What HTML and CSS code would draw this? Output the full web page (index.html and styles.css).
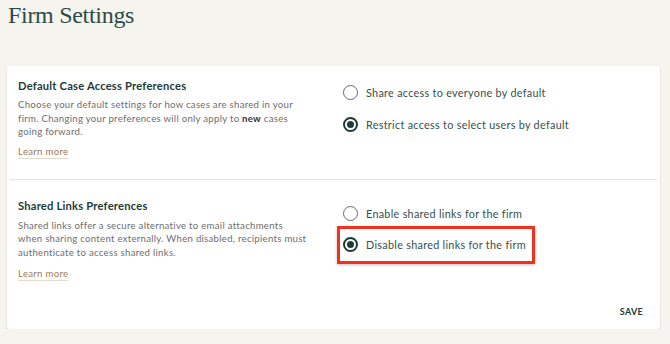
FILE: index.html
```html
<!DOCTYPE html>
<html lang="en">
  <head>
    <meta charset="UTF-8" />
    <title>Firm Settings</title>
    <link rel="stylesheet" href="styles.css">
  </head>
  <body>
    <h1 class="page-title">Firm Settings</h1>

    <div class="settings-card">
      <!-- Default case access -->
      <div class="pref-section first">
        <div class="pref-info">
          <h2>Default Case Access Preferences</h2>
          <p>Choose your default settings for how cases are shared in your firm. Changing your preferences will only apply to <strong>new</strong> cases going forward.</p>
          <a href="#" class="learn-more">Learn more</a>
        </div>
        <div class="pref-options">
          <label class="radio-row">
            <span class="radio"></span>
            Share access to everyone by default
          </label>
          <label class="radio-row">
            <span class="radio checked"></span>
            Restrict access to select users by default
          </label>
        </div>
      </div>

      <!-- Shared links -->
      <div class="pref-section second">
        <div class="pref-info">
          <h2>Shared Links Preferences</h2>
          <p>Shared links offer a secure alternative to email attachments when sharing content externally. When disabled, recipients must authenticate to access shared links.</p>
          <a href="#" class="learn-more">Learn more</a>
        </div>
        <div class="pref-options">
          <label class="radio-row">
            <span class="radio"></span>
            Enable shared links for the firm
          </label>
          <label class="radio-row highlight">
            <span class="radio checked"></span>
            Disable shared links for the firm
          </label>
        </div>
      </div>

      <div class="card-footer">
        <button class="save-btn">SAVE</button>
      </div>
    </div>
  </body>
</html>
```

FILE: styles.css
```css
* {
  margin: 0;
  padding: 0;
  box-sizing: border-box;
}

body {
  font-family: Lato, "Noto Sans", sans-serif;
  background-color: #f6f4ef;
  padding: 0 10px 0 7px;
  color: #1f3d3a;
}

/* --- Title --- */
.page-title {
  font-family: "Liberation Serif", serif;
  font-weight: normal;
  font-size: 24px;
  line-height: 30px;
  color: #2e4b47;
  padding-left: 1px;
  letter-spacing: -0.3px;
}

/* --- Card --- */
.settings-card {
  margin-top: 36px;
  background-color: #fff;
  border-radius: 3px;
  box-shadow: 0 1px 2px rgba(0, 0, 0, 0.18);
}

.pref-section {
  display: flex;
  padding: 0 11px;
}
.pref-section.first {
  padding-top: 12px;
  padding-bottom: 20px;
  border-bottom: 1px solid #e3e3e3;
  margin: 0 3px;
  padding-left: 8px;
  padding-right: 8px;
}
.pref-section.second {
  padding-top: 18px;
}

.pref-info {
  width: 324px;
  flex: none;
}
.pref-info h2 {
  font-size: 11.2px;
  line-height: 16px;
  font-weight: bold;
  letter-spacing: 0.2px;
  color: #1d3b37;
}
.pref-info p {
  font-size: 9.6px;
  line-height: 13.5px;
  letter-spacing: 0.28px;
  color: #6e6e6e;
  width: 290px;
  margin-top: 4px;
}
.pref-info p strong {
  color: #333;
}
.second .pref-info p {
  margin-top: 5px;
}

.learn-more {
  display: inline-block;
  margin-top: 5px;
  font-size: 9.6px;
  line-height: 13px;
  letter-spacing: 0.3px;
  color: #9b7b55;
  text-decoration: none;
  border-bottom: 1px solid #e6dccd;
}
.second .learn-more {
  margin-top: 8px;
}

/* --- Radio options --- */
.pref-options {
  display: flex;
  flex-direction: column;
  gap: 16px;
  padding-top: 6px;
  padding-left: 1px;
}
.second .pref-options {
  padding-top: 8px;
  gap: 15px;
}
.radio-row {
  position: relative;
  display: flex;
  align-items: center;
  gap: 8px;
  height: 16px;
  font-size: 10.8px;
  letter-spacing: 0.3px;
  color: #35504c;
}
.radio {
  flex: none;
  width: 15px;
  height: 15px;
  border: 1.5px solid #6a6a6a;
  border-radius: 50%;
  display: flex;
  align-items: center;
  justify-content: center;
}
.radio.checked {
  border: 2px solid #1d3b37;
}
.radio.checked::after {
  content: "";
  width: 7px;
  height: 7px;
  border-radius: 50%;
  background-color: #1d3b37;
}

/* red annotation box */
.radio-row.highlight::after {
  content: "";
  position: absolute;
  left: -6px;
  right: -9px;
  top: -11px;
  bottom: -11px;
  border: 3px solid #ef3220;
  box-shadow: 0 1px 3px rgba(0, 0, 0, 0.25);
}

/* --- Footer --- */
.card-footer {
  display: flex;
  justify-content: flex-end;
  padding: 25px 17px 11px;
}
.save-btn {
  border: none;
  background: none;
  font-family: inherit;
  font-size: 9px;
  line-height: 12px;
  font-weight: bold;
  letter-spacing: 0.3px;
  color: #1d3b37;
}
```
